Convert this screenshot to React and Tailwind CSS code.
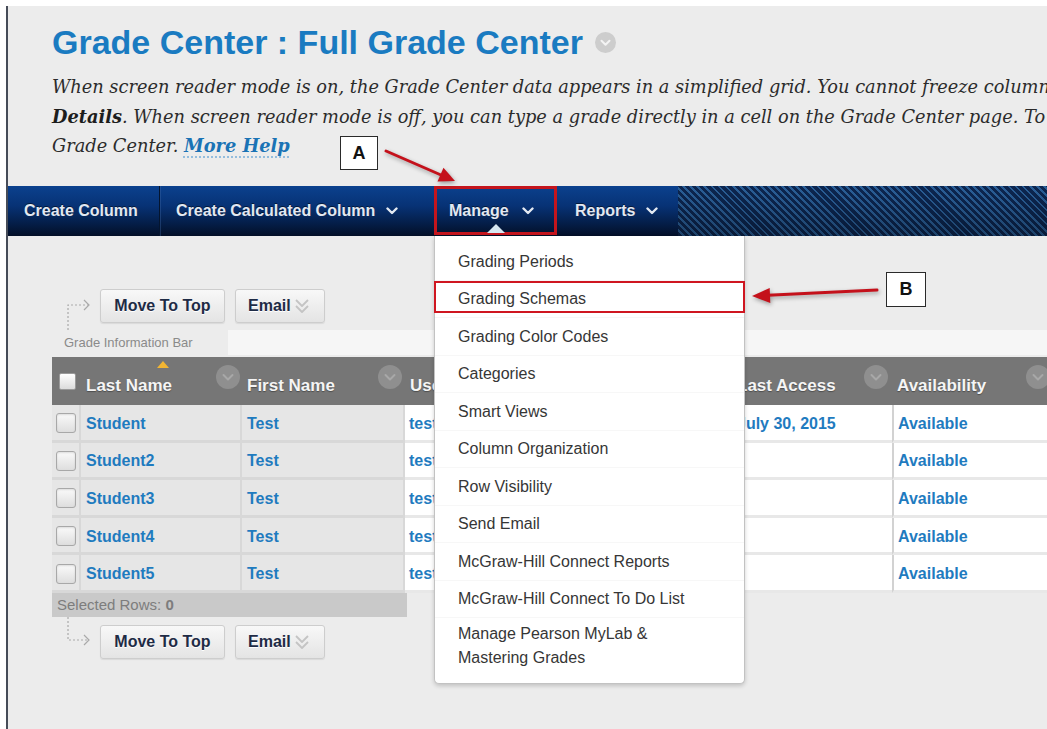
import React from "react";

const SANS = "font-['Liberation_Sans',Arial,sans-serif]";

function NavChevron() {
  return (
    <svg width="12" height="8" viewBox="0 0 12 8" className="shrink-0">
      <path d="M1.5 1.5L6 6l4.5-4.5" fill="none" stroke="#e3e9f2" strokeWidth="2.4" strokeLinecap="round" strokeLinejoin="round" />
    </svg>
  );
}

function ColumnMenu() {
  return (
    <svg width="24" height="24" viewBox="0 0 24 24" className="shrink-0">
      <circle cx="12" cy="12" r="12" fill="#8f8f8f" />
      <path d="M7.5 10l4.5 4.5 4.5-4.5" fill="none" stroke="#a8a8a8" strokeWidth="2" strokeLinecap="round" strokeLinejoin="round" />
    </svg>
  );
}

function TitleMenu() {
  return (
    <svg width="21" height="21" viewBox="0 0 21 21" className="shrink-0">
      <circle cx="10.5" cy="10.5" r="10.5" fill="#cdcdcd" />
      <path d="M6.5 8.8l4 4 4-4" fill="none" stroke="#f4f4f4" strokeWidth="2" strokeLinecap="round" strokeLinejoin="round" />
    </svg>
  );
}

function DoubleChevron() {
  return (
    <svg width="16" height="18" viewBox="0 0 16 18" className="shrink-0">
      <path d="M2 3l6 6 6-6M2 9l6 6 6-6" fill="none" stroke="#c4c4c4" strokeWidth="1.8" strokeLinejoin="round" />
    </svg>
  );
}

function Checkbox({ size }) {
  return (
    <span
      className={
        size === "sm"
          ? "block w-[17px] h-[17px] rounded-[2px] border border-[#9a9a9a] bg-gradient-to-b from-white to-[#dcdcdc]"
          : "block w-[20px] h-[20px] rounded-[3px] border border-[#a8a8a8] bg-gradient-to-b from-[#fafafa] to-[#dedede] shadow-[inset_0_1px_2px_rgba(0,0,0,0.12)]"
      }
    />
  );
}

function ActionRow({ position }) {
  return (
    <div className="flex items-center h-[34px]">
      <svg width="30" height="34" viewBox="0 0 30 34" overflow="visible" className="ml-[11px] shrink-0">
        {position === "top" ? (
          <g fill="none" stroke="#a9a9a9" strokeWidth="1.2">
            <path d="M5 41V16H25" strokeDasharray="2 2" />
            <path d="M21 11l5 5-5 5" />
          </g>
        ) : (
          <g fill="none" stroke="#a9a9a9" strokeWidth="1.2">
            <path d="M5 -8V15H25" strokeDasharray="2 2" />
            <path d="M21 10l5 5-5 5" />
          </g>
        )}
      </svg>
      <button className="ml-[7px] h-[34px] w-[125px] rounded-[3px] border border-[#cdcdcd] bg-gradient-to-b from-[#f8f8f8] to-[#e4e4e4] text-[16px] font-bold text-[#1e2b45] [text-shadow:0_1px_0_#fff] shadow-[0_1px_1px_rgba(0,0,0,0.08)]">
        Move To Top
      </button>
      <button className="ml-[10px] h-[34px] w-[90px] rounded-[3px] border border-[#cdcdcd] bg-gradient-to-b from-[#f8f8f8] to-[#e4e4e4] text-[16px] font-bold text-[#1e2b45] [text-shadow:0_1px_0_#fff] shadow-[0_1px_1px_rgba(0,0,0,0.08)] flex items-center pl-[12px] gap-[3px]">
        Email
        <DoubleChevron />
      </button>
    </div>
  );
}

const students = [
  { last: "Student", first: "Test", user: "test01", id: "", access: "July 30, 2015" },
  { last: "Student2", first: "Test", user: "test02", id: "", access: "" },
  { last: "Student3", first: "Test", user: "test03", id: "", access: "" },
  { last: "Student4", first: "Test", user: "test04", id: "", access: "" },
  { last: "Student5", first: "Test", user: "test05", id: "", access: "" },
];

const manageItems = [
  "Grading Periods",
  "Grading Schemas",
  "Grading Color Codes",
  "Categories",
  "Smart Views",
  "Column Organization",
  "Row Visibility",
  "Send Email",
  "McGraw-Hill Connect Reports",
  "McGraw-Hill Connect To Do List",
];

function HeaderCell({ width, label, menuRight, children }) {
  return (
    <div className={"relative flex justify-between shrink-0 " + width}>
      <span className="mt-[19px] pl-[5px] text-[17px] leading-[20px] font-bold text-[#f5f5f5] [text-shadow:0_1px_1px_rgba(0,0,0,0.35)] whitespace-nowrap">
        {label}
      </span>
      <span className={"mt-[8px] " + menuRight}>
        <ColumnMenu />
      </span>
      {children}
    </div>
  );
}

export default function App() {
  return (
    <div className={"relative w-[1047px] h-[729px] overflow-hidden bg-white pt-[6px] pl-[6px] " + SANS}>
      <div className="h-[723px] border-l-2 border-[#464c58] bg-[#ececec] flex flex-col">
        {/* Page heading */}
        <div className="h-[180px] shrink-0 pl-[44px] pt-[18px]">
          <div className="flex items-center gap-[12px]">
            <h1 className="text-[34px] leading-[37px] font-bold text-[#1a7bc1] whitespace-nowrap">
              Grade Center : Full Grade Center
            </h1>
            <TitleMenu />
          </div>
          <div className="mt-[11px] font-['DejaVu_Serif',Georgia,serif] italic text-[17.8px] leading-[29.5px] text-[#2b2b2b] whitespace-nowrap">
            <div>When screen reader mode is on, the Grade Center data appears in a simplified grid. You cannot freeze columns or type grades directly in cells.</div>
            <div>
              <b className="text-[#1d1d1d]">Details</b>. When screen reader mode is off, you can type a grade directly in a cell on the Grade Center page. To learn more, see the help for the
            </div>
            <div>
              Grade Center.{" "}
              <a className="font-bold text-[#1a73b5] underline decoration-dotted decoration-[#8ab8dc] underline-offset-[5px]">More Help</a>
            </div>
          </div>
        </div>

        {/* Action bar */}
        <nav className="h-[50px] shrink-0 flex bg-[linear-gradient(to_bottom,#0b418e_0%,#073275_40%,#041c44_78%,#030f27_100%)] text-[16px] font-bold text-[#e2e8f1] [text-shadow:0_-1px_0_rgba(0,0,0,0.5)]">
          <div className="flex items-center pl-[16px] w-[152px] border-r border-[#04152f] shadow-[1px_0_0_rgba(70,110,170,0.35)]">Create Column</div>
          <div className="flex items-center pl-[16px] w-[274px] gap-[11px] whitespace-nowrap">
            Create Calculated Column
            <NavChevron />
          </div>
          <div className="relative flex items-center w-[123px] h-[49px] border-[3px] border-[#c4151d] pl-[12px] gap-[13px]">
            Manage
            <NavChevron />
            <span className="absolute left-[50px] bottom-[-1px] w-0 h-0 border-l-[9px] border-r-[9px] border-b-[9px] border-l-transparent border-r-transparent border-b-[#d6e7f1]" />
          </div>
          <div className="flex items-center pl-[18px] w-[121px] gap-[11px]">
            Reports
            <NavChevron />
          </div>
          <div className="flex-1 bg-[image:linear-gradient(to_bottom,rgba(0,0,0,0)_0%,rgba(0,0,0,0.3)_100%),repeating-linear-gradient(45deg,#0c2650_0px,#0c2650_3px,#2a5f98_3px,#2a5f98_5px)]" />
        </nav>

        {/* Grade grid */}
        <div className="pl-[44px] pt-[53px]">
          <ActionRow position="top" />

          <div className="mt-[7px] h-[25px] flex">
            <div className="w-[176px] pl-[12px] flex items-center text-[13px] text-[#8a8a8a]">Grade Information Bar</div>
            <div className="flex-1 bg-[#f6f6f6]" />
          </div>

          <div className="mt-[2px] h-[48px] flex bg-[#767676] w-[1010px]">
            <div className="w-[29px] shrink-0 pl-[7px] pt-[16px]">
              <Checkbox size="sm" />
            </div>
            <HeaderCell width="w-[161px]" label="Last Name" menuRight="mr-[2px]">
              <span className="absolute left-[76px] top-[4px] w-0 h-0 border-l-[6px] border-r-[6px] border-b-[7px] border-l-transparent border-r-transparent border-b-[#f2b532]" />
            </HeaderCell>
            <HeaderCell width="w-[163px]" label="First Name" menuRight="mr-[3px]" />
            <HeaderCell width="w-[165px]" label="Username" menuRight="mr-[3px]" />
            <HeaderCell width="w-[162px]" label="Student ID" menuRight="mr-[3px]" />
            <HeaderCell width="w-[160px]" label="Last Access" menuRight="mr-[4px]" />
            <HeaderCell width="w-[170px]" label="Availability" menuRight="mr-[12px]" />
          </div>

          <div className="w-[1010px] text-[16px] font-bold text-[#1f7bbf]">
            {students.map((s) => (
              <div key={s.last} className="flex h-[37.6px]">
                <div className="w-[29px] shrink-0 flex items-center pt-[2px] pl-[4px] bg-[#e6e6e6] border-r-2 border-b-[3px] border-[#d8d8d8]">
                  <Checkbox />
                </div>
                <div className="w-[161px] shrink-0 flex items-center pt-[3px] pl-[5px] bg-[#e6e6e6] border-r-2 border-b-[3px] border-[#d8d8d8]">{s.last}</div>
                <div className="w-[163px] shrink-0 flex items-center pt-[3px] pl-[5px] bg-[#e6e6e6] border-r-2 border-b-[3px] border-[#d8d8d8]">{s.first}</div>
                <div className="w-[165px] shrink-0 flex items-center pt-[3px] pl-[4px] bg-white border-b-[3px] border-[#e8e8e8]">{s.user}</div>
                <div className="w-[162px] shrink-0 flex items-center pt-[3px] pl-[5px] bg-white border-b-[3px] border-[#e8e8e8]">{s.id}</div>
                <div className="w-[160px] shrink-0 flex items-center pt-[3px] pl-[5px] bg-white border-b-[3px] border-[#e8e8e8] whitespace-nowrap">{s.access}</div>
                <div className="w-[170px] shrink-0 flex items-center pt-[3px] pl-[4px] bg-white border-l-2 border-l-[#d2d2d2] border-b-[3px] border-b-[#e8e8e8]">Available</div>
              </div>
            ))}
          </div>

          <div className="w-[355px] h-[24px] flex items-center pl-[5px] bg-[#c9c9c9] text-[15px] text-[#7d7d7d]">
            Selected Rows:&nbsp;<b>0</b>
          </div>

          <div className="mt-[8px]">
            <ActionRow position="bottom" />
          </div>
        </div>
      </div>

      {/* Manage menu */}
      <div className="absolute left-[434px] top-[236px] w-[311px] h-[448px] bg-white border border-[#c2c2c2] border-t-0 rounded-b-[5px] shadow-[0_2px_4px_rgba(0,0,0,0.18)] pt-[7px] text-[16px] text-[#363636]">
        {manageItems.map((item) => (
          <div key={item} className="h-[37.5px] flex items-center pt-[1px] pl-[23px] border-b border-[#f7f7f7] whitespace-nowrap">
            {item}
          </div>
        ))}
        <div className="pl-[23px] pt-[4px] leading-[24px]">
          Manage Pearson MyLab &amp;
          <br />
          Mastering Grades
        </div>
        <div className="absolute left-[-1px] top-[45px] w-[311px] h-[32px] border-2 border-[#cf1620]" />
      </div>

      {/* Callout labels */}
      <div className="absolute left-[340px] top-[136px] w-[38px] h-[34px] bg-white border-[1.5px] border-[#2a2a2a] flex items-center justify-center text-[18px] font-bold text-[#111]">
        A
      </div>
      <div className="absolute left-[886px] top-[272px] w-[40px] h-[35px] bg-white border-[1.5px] border-[#2a2a2a] flex items-center justify-center text-[18px] font-bold text-[#111]">
        B
      </div>

      {/* Callout arrows */}
      <svg className="absolute left-0 top-0 drop-shadow-[1px_2px_2px_rgba(0,0,0,0.35)]" width="1047" height="729" viewBox="0 0 1047 729">
        <line x1="386" y1="151" x2="441" y2="175" stroke="#c4111b" strokeWidth="3" strokeLinecap="round" />
        <polygon points="455,181 437.5,181.5 443.5,167.8" fill="#c4111b" />
        <line x1="877" y1="290" x2="768" y2="295.2" stroke="#c4111b" strokeWidth="3" strokeLinecap="round" />
        <polygon points="752,296 769.7,288.1 770.3,303" fill="#c4111b" />
      </svg>
    </div>
  );
}
